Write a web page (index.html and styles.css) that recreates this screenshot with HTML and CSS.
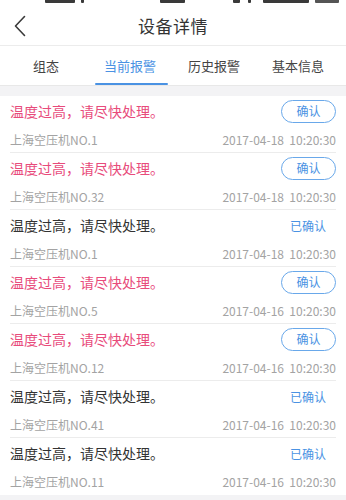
FILE: index.html
```html
<!DOCTYPE html>
<html lang="zh-CN">
<head>
<meta charset="utf-8">
<title>设备详情</title>
<link rel="stylesheet" href="styles.css">
</head>
<body>
<div class="status">
  <span class="mark m1"></span>
  <span class="mark m2"></span>
  <span class="mark m3"></span>
  <span class="mark m4"></span>
  <span class="mark m5"></span>
  <span class="mark m6"></span>
  <span class="mark batt"></span>
</div>
<header class="header">
  <svg class="back" width="14" height="22" viewBox="0 0 14 22"><path d="M11.5 1.5 L2.5 11 L11.5 20.5" fill="none" stroke="#3a3a3a" stroke-width="1.6" stroke-linecap="round" stroke-linejoin="round"/></svg>
  <h1 class="title">设备详情</h1>
</header>
<nav class="tabs">
  <div class="tab">组态</div>
  <div class="tab active">当前报警</div>
  <div class="tab">历史报警</div>
  <div class="tab">基本信息</div>
</nav>
<div class="gap"></div>
<ul class="list">
  <li class="row alert">
    <div class="line1"><span class="msg">温度过高，请尽快处理。</span><button class="btn">确认</button></div>
    <div class="line2"><span>上海空压机NO.1</span><span>2017-04-18&nbsp;&nbsp;10:20:30</span></div>
  </li>
  <li class="row alert">
    <div class="line1"><span class="msg">温度过高，请尽快处理。</span><button class="btn">确认</button></div>
    <div class="line2"><span>上海空压机NO.32</span><span>2017-04-18&nbsp;&nbsp;10:20:30</span></div>
  </li>
  <li class="row">
    <div class="line1"><span class="msg">温度过高，请尽快处理。</span><span class="done">已确认</span></div>
    <div class="line2"><span>上海空压机NO.1</span><span>2017-04-18&nbsp;&nbsp;10:20:30</span></div>
  </li>
  <li class="row alert">
    <div class="line1"><span class="msg">温度过高，请尽快处理。</span><button class="btn">确认</button></div>
    <div class="line2"><span>上海空压机NO.5</span><span>2017-04-16&nbsp;&nbsp;10:20:30</span></div>
  </li>
  <li class="row alert">
    <div class="line1"><span class="msg">温度过高，请尽快处理。</span><button class="btn">确认</button></div>
    <div class="line2"><span>上海空压机NO.12</span><span>2017-04-16&nbsp;&nbsp;10:20:30</span></div>
  </li>
  <li class="row">
    <div class="line1"><span class="msg">温度过高，请尽快处理。</span><span class="done">已确认</span></div>
    <div class="line2"><span>上海空压机NO.41</span><span>2017-04-16&nbsp;&nbsp;10:20:30</span></div>
  </li>
  <li class="row last">
    <div class="line1"><span class="msg">温度过高，请尽快处理。</span><span class="done">已确认</span></div>
    <div class="line2"><span>上海空压机NO.11</span><span>2017-04-16&nbsp;&nbsp;10:20:30</span></div>
  </li>
</ul>
<div class="foot"></div>
</body>
</html>
```
FILE: styles.css
```css
* { box-sizing: border-box; }
html, body { margin: 0; padding: 0; }
body {
  width: 346px;
  height: 500px;
  overflow: hidden;
  background: #fff;
  font-family: "Noto Sans CJK SC", "Noto Sans", sans-serif;
  color: #333;
}
.status {
  height: 5px;
  display: flex;
  align-items: flex-start;
  padding-left: 45px;
}
.mark {
  display: block;
  height: 3px;
  background: #3a3a3a;
  border-radius: 0 0 1px 1px;
}
.m1 { width: 30px; }
.m2 { width: 3px; margin-left: 6px; }
.m3 { width: 25px; margin-left: 76px; }
.m4 { width: 7px; margin-left: 48px; }
.m5 { width: 3px; margin-left: 8px; }
.m6 { width: 46px; margin-left: 12px; }
.batt { width: 24px; margin-left: 6px; background: #555; }
.header {
  height: 41px;
  display: flex;
  align-items: center;
  justify-content: center;
  position: relative;
  border-bottom: 1px solid #ececec;
}
.back {
  position: absolute;
  left: 13px;
  top: 10px;
}
.title {
  margin: 0;
  font-size: 17px;
  font-weight: 400;
  color: #333;
  letter-spacing: 0.5px;
}
.tabs {
  display: flex;
  height: 40px;
  padding: 0 6px 0 4px;
  border-bottom: 1px solid #e8e8e8;
}
.tab {
  flex: 1;
  display: flex;
  align-items: center;
  justify-content: center;
  font-size: 13px;
  color: #444;
  position: relative;
}
.tab.active { color: #4a92e3; }
.tab.active::after {
  content: "";
  position: absolute;
  left: 7px;
  right: 4px;
  bottom: 0;
  height: 2px;
  background: #4a92e3;
  border-radius: 1px;
}
.gap {
  height: 10px;
  background: #f3f3f5;
}
.list {
  list-style: none;
  margin: 0;
  padding: 0 10px;
}
.row {
  height: 57px;
  padding-top: 3px;
  border-bottom: 1px solid #ececec;
  display: flex;
  flex-direction: column;
}
.row.last { border-bottom: none; }
.line1 {
  display: flex;
  justify-content: space-between;
  align-items: center;
  height: 24px;
}
.msg {
  font-size: 14px;
  color: #333;
}
.alert .msg { color: #e84b7b; }
.btn {
  width: 55px;
  height: 23px;
  border: 1.5px solid #69a8ea;
  border-radius: 12px;
  background: #fff;
  color: #4a92e3;
  font-family: inherit;
  font-size: 12px;
  padding: 0;
  line-height: 20px;
}
.done {
  font-size: 12px;
  color: #4a92e3;
  padding-right: 10px;
}
.line2 {
  display: flex;
  justify-content: space-between;
  align-items: center;
  margin-top: 7px;
  height: 18px;
  font-size: 12px;
  color: #a3a3a3;
}
.foot {
  height: 10px;
  background: #f3f3f5;
}
```
